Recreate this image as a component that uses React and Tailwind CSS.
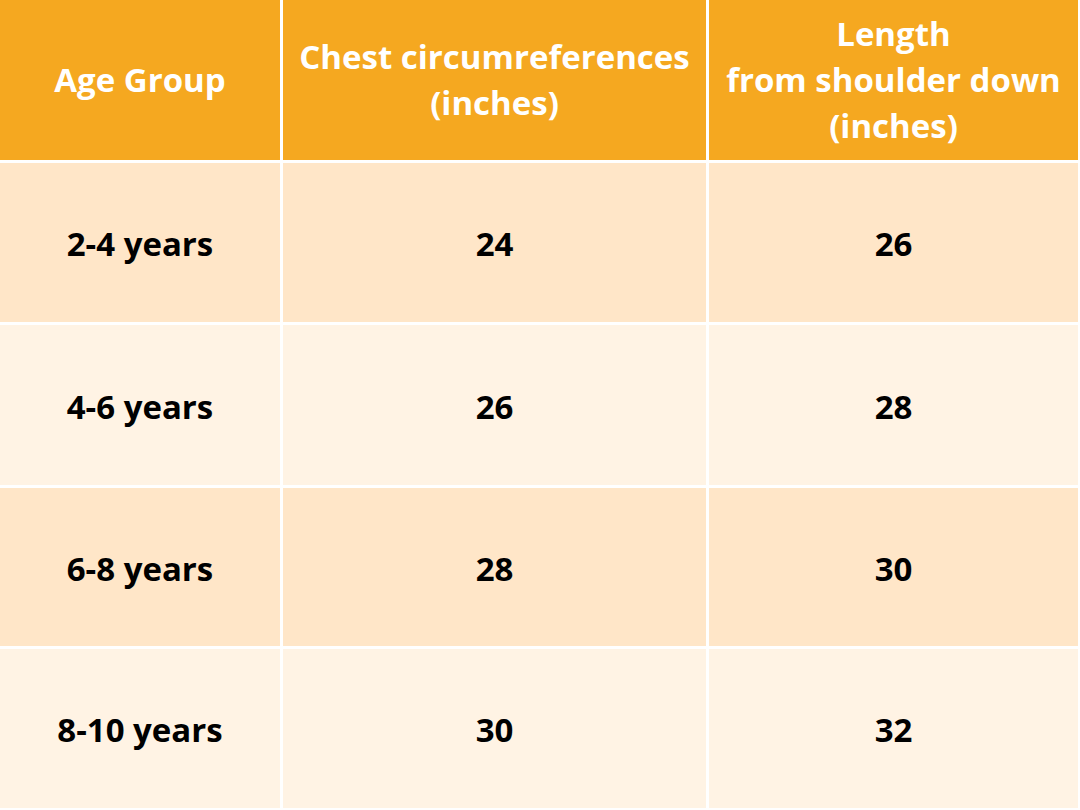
import React from "react";

const rows = [
  ["2-4 years", "24", "26"],
  ["4-6 years", "26", "28"],
  ["6-8 years", "28", "30"],
  ["8-10 years", "30", "32"],
];

const App = () => {
  return (
    <div className="w-[1080px] h-[810px] bg-white" style={{ fontFamily: "'Open Sans', sans-serif" }}>
      <div className="grid grid-cols-[280px_423px_369px] grid-rows-[160px_159px_160px_158px_159px] gap-[3px] w-[1078px] bg-white">
        <div className="bg-[#f5a820] text-white font-bold text-[33px] leading-[46px] flex items-center justify-center text-center">
          Age Group
        </div>
        <div className="bg-[#f5a820] text-white font-bold text-[33px] leading-[46px] flex items-center justify-center text-center">
          Chest circumreferences<br />(inches)
        </div>
        <div className="bg-[#f5a820] text-white font-bold text-[33px] leading-[46px] flex items-center justify-center text-center">
          Length<br />from shoulder down<br />(inches)
        </div>
        {rows.map((r, i) =>
          r.map((c, j) => (
            <div
              key={i + "-" + j}
              className={(i % 2 === 0 ? "bg-[#ffe6c8]" : "bg-[#fff3e4]") + " text-black font-bold text-[33px] flex items-center justify-center pt-[3px]"}
            >
              {c}
            </div>
          ))
        )}
      </div>
    </div>
  );
};

export default App;
